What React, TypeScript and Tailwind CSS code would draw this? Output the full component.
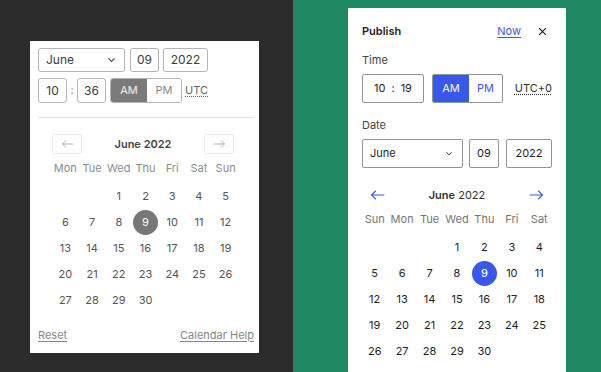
import React from 'react';

const LEFT_DAYS = ['Mon', 'Tue', 'Wed', 'Thu', 'Fri', 'Sat', 'Sun'];
const RIGHT_DAYS = ['Sun', 'Mon', 'Tue', 'Wed', 'Thu', 'Fri', 'Sat'];

function buildWeeks(offset: number) {
  const cells: (number | null)[] = [];
  for (let i = 0; i < offset; i++) cells.push(null);
  for (let d = 1; d <= 30; d++) cells.push(d);
  const weeks: (number | null)[][] = [];
  for (let i = 0; i < cells.length; i += 7) weeks.push(cells.slice(i, i + 7));
  return weeks;
}

function Chevron({ className }: { className?: string }) {
  return (
    <svg viewBox="0 0 12 8" className={className} fill="none" stroke="currentColor" strokeWidth="1.5">
      <path d="M2 2l4 4 4-4" />
    </svg>
  );
}

function Arrow({ dir, className }: { dir: 'left' | 'right'; className?: string }) {
  return (
    <svg viewBox="0 0 20 14" className={className} fill="none" stroke="currentColor" strokeWidth="1.3">
      {dir === 'left' ? (
        <path d="M18 7H3M8 2L3 7l5 5" />
      ) : (
        <path d="M2 7h15M12 2l5 5-5 5" />
      )}
    </svg>
  );
}

function LegacyPicker() {
  const weeks = buildWeeks(2);
  return (
    <div className="ml-[30px] mt-[41px] flex h-[312px] w-[229px] flex-col bg-white pl-2 pr-[6px] pt-[7px] text-[11px] text-[#555]">
      <div className="flex h-6 items-center">
        <div className="flex h-6 w-[87px] items-center justify-between rounded-[3px] border border-[#b5b5b5] pl-[7px] pr-[8px] text-[12px] text-[#3c3c3c]">
          <span>June</span>
          <Chevron className="h-[6px] w-[9px] text-[#555]" />
        </div>
        <div className="ml-[5px] flex h-6 w-[29px] items-center justify-center rounded-[3px] border border-[#b5b5b5] text-[12px] text-[#3c3c3c]">
          09
        </div>
        <div className="ml-[4px] flex h-6 w-[45px] items-center justify-center rounded-[3px] border border-[#b5b5b5] text-[12px] text-[#3c3c3c]">
          2022
        </div>
      </div>
      <div className="mt-[6px] flex h-[25px] items-center">
        <div className="flex h-[25px] w-[29px] items-center justify-center rounded-[3px] border border-[#b5b5b5] text-[12px] text-[#3c3c3c]">
          10
        </div>
        <span className="w-[10px] text-center text-[#888]">:</span>
        <div className="flex h-[25px] w-[29px] items-center justify-center rounded-[3px] border border-[#b5b5b5] text-[12px] text-[#3c3c3c]">
          36
        </div>
        <div className="ml-[4px] flex h-[25px] overflow-hidden rounded-[3px] border border-[#b5b5b5]">
          <div className="flex w-[36px] items-center justify-center bg-[#7a7a7a] text-[11px] text-white/90">AM</div>
          <div className="flex w-[34px] items-center justify-center bg-white text-[11px] text-[#8a8a8a]">PM</div>
        </div>
        <span className="ml-[3px] text-[11px] text-[#666] underline decoration-dotted underline-offset-2">UTC</span>
      </div>
      <div className="mt-[14px] h-px bg-[#e2e2e2]" />
      <div className="ml-[14px] mt-[16px] w-[187px]">
        <div className="flex h-5 items-center justify-between">
          <div className="flex h-5 w-[30px] items-center justify-center rounded-[2px] border border-[#eaeaea]">
            <Arrow dir="left" className="h-[10px] w-[15px] text-[#aaa]" />
          </div>
          <span className="font-semibold text-[#444]">June 2022</span>
          <div className="mr-[5px] flex h-5 w-[30px] items-center justify-center rounded-[2px] border border-[#eaeaea]">
            <Arrow dir="right" className="h-[10px] w-[15px] text-[#aaa]" />
          </div>
        </div>
        <div className="mt-[2px] grid h-6 grid-cols-7 items-center text-center text-[#8c8c8c]">
          {LEFT_DAYS.map((d) => (
            <span key={d}>{d}</span>
          ))}
        </div>
        <div className="mt-[3px]">
          {weeks.map((week, i) => (
            <div key={i} className="grid h-[26px] grid-cols-7 items-center text-center">
              {Array.from({ length: 7 }).map((_, j) => {
                const day = week[j];
                if (!day) return <span key={j} />;
                return (
                  <div key={j} className="flex justify-center">
                    {day === 9 ? (
                      <span className="flex h-[25px] w-[25px] items-center justify-center rounded-full bg-[#777] text-white">
                        {day}
                      </span>
                    ) : (
                      <span>{day}</span>
                    )}
                  </div>
                );
              })}
            </div>
          ))}
        </div>
      </div>
      <div className="mt-auto mb-[10px] flex items-center justify-between text-[11px] text-[#888]">
        <span className="underline underline-offset-2">Reset</span>
        <span className="mr-[-1px] underline underline-offset-2">Calendar Help</span>
      </div>
    </div>
  );
}

function PublishPicker() {
  const weeks = buildWeeks(3);
  return (
    <div className="ml-[55px] mt-2 h-[380px] w-[218px] bg-white px-[14px] pt-[14px] text-[11px] text-[#1e1e1e]">
      <div className="flex h-[18px] items-center">
        <span className="font-semibold">Publish</span>
        <span className="ml-auto text-[#3858e9] underline underline-offset-2">Now</span>
        <svg viewBox="0 0 12 12" className="ml-[17px] mr-[5px] h-[9px] w-[9px]" fill="none" stroke="currentColor" strokeWidth="1.6">
          <path d="M1.5 1.5l9 9M10.5 1.5l-9 9" />
        </svg>
      </div>
      <div className="mt-[12px] h-4 leading-4 text-[#444]">Time</div>
      <div className="mt-[6px] flex h-[29px] items-center">
        <div className="flex h-[29px] w-[62px] items-center justify-center gap-[6px] rounded-[2px] border border-[#949494]">
          <span>10</span>
          <span>:</span>
          <span>19</span>
        </div>
        <div className="ml-[8px] flex h-[29px] overflow-hidden rounded-[2px] border border-[#949494]">
          <div className="flex w-[36px] items-center justify-center bg-[#3858e9] text-white">AM</div>
          <div className="flex w-[33px] items-center justify-center text-[#3858e9]">PM</div>
        </div>
        <span className="ml-auto text-[#333] underline decoration-dotted underline-offset-2">UTC+0</span>
      </div>
      <div className="mt-[14px] h-4 leading-4 text-[#444]">Date</div>
      <div className="mt-[6px] flex h-[29px] items-center">
        <div className="flex h-[29px] w-[101px] items-center justify-between rounded-[2px] border border-[#949494] pl-[7px] pr-[9px]">
          <span>June</span>
          <Chevron className="h-[5px] w-[8px]" />
        </div>
        <div className="ml-[6px] flex h-[29px] w-[30px] items-center justify-center rounded-[2px] border border-[#949494]">
          09
        </div>
        <div className="ml-auto flex h-[29px] w-[46px] items-center justify-center rounded-[2px] border border-[#949494]">
          2022
        </div>
      </div>
      <div className="mt-[15px] flex h-6 items-center justify-between px-[7px]">
        <Arrow dir="left" className="h-[12px] w-[17px] text-[#3858e9]" />
        <span className="text-[#333]">
          <strong className="font-semibold">June</strong> 2022
        </span>
        <Arrow dir="right" className="h-[12px] w-[17px] text-[#3858e9]" />
      </div>
      <div className="-mx-[1px] grid h-6 grid-cols-7 items-center text-center text-[#757575]">
        {RIGHT_DAYS.map((d) => (
          <span key={d}>{d}</span>
        ))}
      </div>
      <div className="-mx-[1px] mt-[3px]">
        {weeks.map((week, i) => (
          <div key={i} className="grid h-[26px] grid-cols-7 items-center text-center">
            {Array.from({ length: 7 }).map((_, j) => {
              const day = week[j];
              if (!day) return <span key={j} />;
              return (
                <div key={j} className="flex justify-center">
                  {day === 9 ? (
                    <span className="flex h-[25px] w-[25px] items-center justify-center rounded-full bg-[#3858e9] font-medium text-white">
                      {day}
                    </span>
                  ) : (
                    <span>{day}</span>
                  )}
                </div>
              );
            })}
          </div>
        ))}
      </div>
    </div>
  );
}

export default function App() {
  return (
    <div className="flex h-[372px] w-[601px] overflow-hidden font-['Inter',sans-serif]">
      <div className="w-[293px] shrink-0 bg-[#2c2c2c]">
        <LegacyPicker />
      </div>
      <div className="flex-1 bg-[#1e8863]">
        <PublishPicker />
      </div>
    </div>
  );
}
